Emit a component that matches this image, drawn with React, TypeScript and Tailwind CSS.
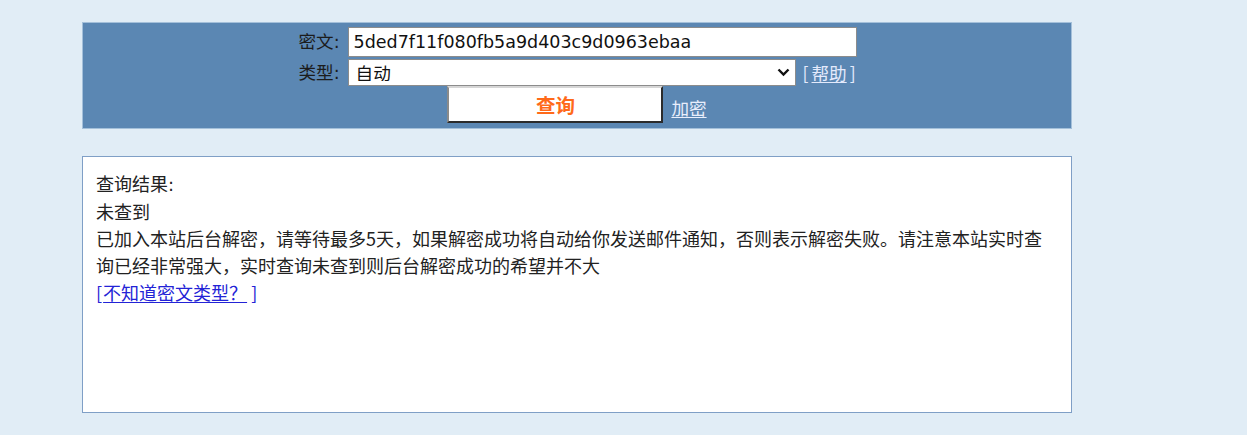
export default function App() {
  return (
    <div className="min-h-screen w-full bg-[#e1edf6] pt-[22px] font-['Noto_Sans_CJK_SC',sans-serif] text-[#222]">
      {/* query form */}
      <div className="ml-[82px] flex h-[107px] w-[990px] flex-col items-center border border-[#a4c0da] bg-[#5b87b3] pt-[4px]">
        <div className="grid grid-cols-[auto_509px] items-center gap-x-[8px] gap-y-[2px] pl-[1px]">
          <div className="text-right text-[17.6px] leading-none text-[#1c1c1c]">
            密文<span className="font-['DejaVu_Sans',sans-serif]">:</span>
          </div>
          <input
            readOnly
            value="5ded7f11f080fb5a9d403c9d0963ebaa"
            className="h-[30px] w-[509px] border border-[#8c8c8c] bg-white px-[5px] font-['DejaVu_Sans',sans-serif] text-[17.5px] text-[#111] outline-none"
          />
          <div className="text-right text-[17.6px] leading-none text-[#1c1c1c]">
            类型<span className="font-['DejaVu_Sans',sans-serif]">:</span>
          </div>
          <div className="flex items-center">
            <div className="relative h-[27px] w-[448px]">
              <select className="h-full w-full appearance-none border border-[#8c8c8c] bg-white pl-[7px] text-[17.6px] leading-none text-[#111] outline-none">
                <option>自动</option>
              </select>
              <svg
                className="pointer-events-none absolute right-[6px] top-[9px]"
                width="13"
                height="9"
                viewBox="0 0 13 9"
              >
                <path d="M1.5 1.5 L6.5 6.5 L11.5 1.5" fill="none" stroke="#111" strokeWidth="2.4" />
              </svg>
            </div>
            <span className="ml-[7px] text-[17.6px] leading-none text-[#e4eafc]">
              [<span className="mx-[3px] underline underline-offset-2">帮助</span>]
            </span>
          </div>
        </div>
        <div className="flex items-center">
          <button className="h-[37px] w-[216px] border-2 border-t-[#d6d6d6] border-l-[#8a8a8a] border-r-[#2b2b2b] border-b-[#2b2b2b] bg-white text-[19.5px] font-bold leading-none text-[#ff6a1a]">
            查询
          </button>
          <a className="ml-[8px] mt-[6px] text-[17.6px] leading-none text-[#e8eefc] underline underline-offset-2">加密</a>
        </div>
      </div>

      {/* result */}
      <div className="ml-[82px] mt-[27px] h-[257px] w-[990px] border border-[#7f9fc6] bg-white px-[13px] pt-[13px] text-[18px] leading-[27px]">
        <div>查询结果<span className="font-['DejaVu_Sans',sans-serif]">:</span></div>
        <div>未查到</div>
        <div>
          已加入本站后台解密，请等待最多5天，如果解密成功将自动给你发送邮件通知，否则表示解密失败。请注意本站实时查询已经非常强大，实时查询未查到则后台解密成功的希望并不大
        </div>
        <div className="text-[#2323d6]">
          [<span className="ml-[1px] underline underline-offset-2">不知道密文类型？</span> ]
        </div>
      </div>
    </div>
  );
}
